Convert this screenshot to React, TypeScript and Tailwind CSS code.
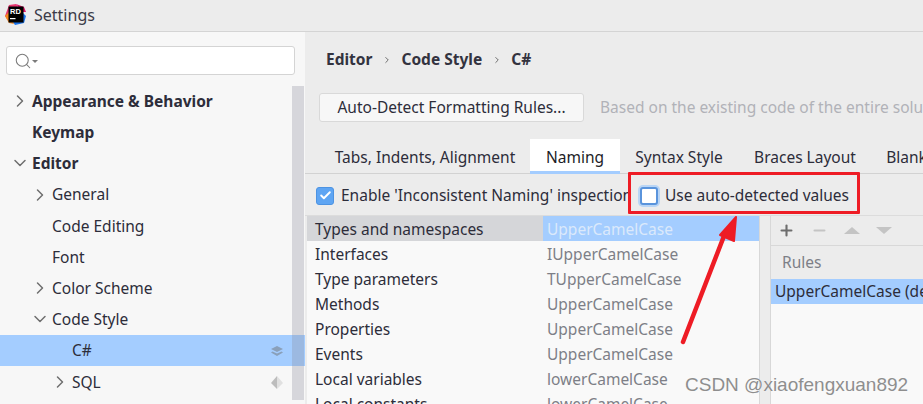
import { ChevronRight, ChevronDown, Check, Plus, Minus, Search } from 'lucide-react'

const FONT = "font-['Noto_Sans','Open_Sans',sans-serif]"

const tree = [
    { label: 'Appearance & Behavior', bold: true, arrow: 'right', indent: 0 },
    { label: 'Keymap', bold: true, arrow: '', indent: 0 },
    { label: 'Editor', bold: true, arrow: 'down', indent: 0 },
    { label: 'General', arrow: 'right', indent: 1 },
    { label: 'Code Editing', arrow: '', indent: 1 },
    { label: 'Font', arrow: '', indent: 1 },
    { label: 'Color Scheme', arrow: 'right', indent: 1 },
    { label: 'Code Style', arrow: 'down', indent: 1 },
    { label: 'C#', arrow: '', indent: 2, selected: true },
    { label: 'SQL', arrow: 'right', indent: 2 },
]

const naming = [
    ['Types and namespaces', 'UpperCamelCase'],
    ['Interfaces', 'IUpperCamelCase'],
    ['Type parameters', 'TUpperCamelCase'],
    ['Methods', 'UpperCamelCase'],
    ['Properties', 'UpperCamelCase'],
    ['Events', 'UpperCamelCase'],
    ['Local variables', 'lowerCamelCase'],
    ['Local constants', 'lowerCamelCase'],
]

const Logo = () => (
    <svg width="21" height="21" viewBox="0 0 21 21" className="shrink-0">
        <path d="M4 1 L11 0 L13 3 L4 18 L0 12 Z" fill="#e8376f" />
        <path d="M0 12 L5 7 L9 20 L4 19 Z" fill="#f58a1f" />
        <path d="M11 0 L19 3 L21 8 L17 8 Z" fill="#dd1265" />
        <path d="M17 8 L21 12 L19 19 L10 21 L8 18 Z" fill="#1b73e8" />
        <rect x="3.5" y="2.5" width="15" height="16" fill="#000" />
        <text x="5" y="10" fontSize="7.5" fontWeight="700" fill="#fff" fontFamily="'Liberation Sans', sans-serif">RD</text>
        <rect x="5" y="14" width="5.5" height="1.2" fill="#fff" />
    </svg>
)

const App = () => {
    return (
        <div className={`relative w-[923px] h-[404px] overflow-hidden bg-[#ececec] text-[15.5px] text-[#2d2d3a] ${FONT}`}>
            <div className="flex items-center gap-[8px] h-[32px] pl-[5px] pb-[2px] border-b border-[#d4d4d4] text-[#3b3b48]">
                <Logo />
                <span className="text-[16px]">Settings</span>
            </div>
            <div className="flex h-[372px]">
                {/* sidebar */}
                <div className="w-[305px] shrink-0 bg-[#f7f7f7] flex flex-col">
                    <div className="px-[6px] pt-[14px] shrink-0">
                        <div className="flex items-center h-[29px] w-[289px] pl-[7px] bg-white border border-[#d4d4d4] rounded-[3px]">
                            <Search size={18} className="text-[#7b7b7b]" strokeWidth={1.4} />
                            <div className="mt-[2px] border-x-[3px] border-x-transparent border-t-[3px] border-t-[#7b7b7b]" />
                        </div>
                    </div>
                    <div className="flex-1 flex flex-col mt-[10.4px] min-h-0">
                        {tree.map((item, index) => (
                            <div
                                key={index}
                                className={`flex items-center h-[31.2px] shrink-0 ${item.selected ? 'bg-[#a4cdff]' : ''} ${item.indent === 0 ? 'pl-[10px]' : item.indent === 1 ? 'pl-[30px]' : 'pl-[50px]'}`}
                            >
                                <span className="w-[22px] shrink-0 text-[#6e6e6e]">
                                    {item.arrow === 'right' && <ChevronRight size={20} strokeWidth={1.8} />}
                                    {item.arrow === 'down' && <ChevronDown size={20} strokeWidth={1.8} />}
                                </span>
                                <span className={`pt-[1px] ${item.bold ? 'font-bold' : ''}`}>{item.label}</span>
                            </div>
                        ))}
                    </div>
                </div>

                {/* main */}
                <div className="flex-1 min-w-0 flex flex-col overflow-hidden">
                    <div className="flex items-center shrink-0 h-[60px] pl-[21px] pb-[4px] font-bold text-[15.5px] text-[#33333f]">
                        <span>Editor</span>
                        <ChevronRight size={10} className="mx-[9.5px] text-[#555]" />
                        <span>Code Style</span>
                        <ChevronRight size={10} className="mx-[9.5px] text-[#555]" />
                        <span>C#</span>
                    </div>
                    <div className="flex items-center shrink-0 h-[30px] pl-[14px] whitespace-nowrap">
                        <button className="w-[265px] h-[29px] shrink-0 pt-[2px] bg-[#f7f7f7] border border-[#d9d9d9] rounded-[3px] text-[15.5px]">
                            Auto-Detect Formatting Rules...
                        </button>
                        <span className="ml-[16px] pt-[2px] text-[#b1b2b8]">Based on the existing code of the entire solution</span>
                    </div>
                    <div className="flex items-end shrink-0 h-[34px] mt-[18px] pl-[15px] border-b border-[#d2d2d2] whitespace-nowrap">
                        {[
                            ['Tabs, Indents, Alignment', 'w-[210px]'],
                            ['Naming', 'w-[90px]'],
                            ['Syntax Style', 'w-[118px]'],
                            ['Braces Layout', 'w-[134px]'],
                            ['Blank Lines', 'w-[111px]'],
                        ].map(([label, w]) => (
                            <div
                                key={label}
                                className={`${w} shrink-0 h-[35px] flex items-center justify-center ${label === 'Naming' ? 'bg-white border-b-[3px] border-[#a4cdff] text-[#1d1d26] pt-[5px] -mb-px' : 'pt-[5px]'}`}
                            >
                                {label}
                            </div>
                        ))}
                    </div>
                    <div className="flex items-center shrink-0 h-[42px] pl-[11px] pt-[1px] whitespace-nowrap">
                        <span className="flex items-center justify-center w-[18px] h-[18px] rounded-[3px] bg-[#5ea5f3] border border-[#4d93e2]">
                            <Check size={13} strokeWidth={3.5} className="text-white" />
                        </span>
                        <span className="ml-[7px] w-[287px] overflow-hidden">Enable 'Inconsistent Naming' inspection</span>
                        <span className="ml-[12px] w-[18px] h-[18px] rounded-[3px] bg-white border-2 border-[#5a94dc] shadow-[0_0_0_2px_#b9d5f5]" />
                        <span className="ml-[7px]">Use auto-detected values</span>
                    </div>
                    <div className="flex flex-1 min-h-0 border-t border-[#dcdcdc] -mt-px">
                        <div className="w-[453px] shrink-0 ml-[2px] bg-[#f9f9f9] flex flex-col border-r border-[#d8d8d8]">
                            {naming.map(([name, value], index) => (
                                <div key={name} className="flex items-center h-[25px] shrink-0 whitespace-nowrap">
                                    <span className={`w-[236px] h-full flex items-center pl-[8px] pt-[2px] ${index === 0 ? 'bg-[#d5d6d9]' : ''}`}>{name}</span>
                                    <span className={`flex-1 h-full flex items-center pl-[4px] pt-[2px] ${index === 0 ? 'bg-[#a4cdff] text-[#dbe9fb]' : 'text-[#7d7f87]'}`}>{value}</span>
                                </div>
                            ))}
                        </div>
                        <div className="w-[11px] shrink-0 bg-[#ececec] border-r border-[#d8d8d8]" />
                        <div className="flex-1 min-w-0 flex flex-col">
                            <div className="flex items-center shrink-0 h-[30px] pl-[7px] gap-[16px] border-b border-[#d8d8d8]">
                                <Plus size={17} strokeWidth={3} className="text-[#6e6e6e]" />
                                <Minus size={17} strokeWidth={3} className="text-[#c4c4c4]" />
                                <span className="border-x-[8px] border-x-transparent border-b-[7px] border-b-[#c4c4c4]" />
                                <span className="border-x-[8px] border-x-transparent border-t-[7px] border-t-[#c4c4c4]" />
                            </div>
                            <div className="flex items-center shrink-0 h-[33px] pl-[11px] text-[#7d7f87]">Rules</div>
                            <div className="flex items-center shrink-0 h-[25px] pl-[4px] bg-[#a4cdff] whitespace-nowrap overflow-hidden">UpperCamelCase (default)</div>
                            <div className="flex-1 bg-[#f9f9f9]" />
                        </div>
                    </div>
                </div>
            </div>

            {/* sidebar scrollbar and the row icons lying over it */}
            <div className="absolute left-[292px] top-[86px] w-[12px] h-[314px] bg-[#8c8c9c]/30" />
            <svg width="12" height="10" viewBox="0 0 12 10" className="absolute left-[271px] top-[346px]">
                <path d="M6 0 L12 3 L6 6 L0 3 Z" fill="#8aa0ba" />
                <path d="M1.5 5.5 L6 7.6 L10.5 5.5 L12 6.5 L6 10 L0 6.5 Z" fill="#8aa0ba" />
            </svg>
            <svg width="12" height="13" viewBox="0 0 12 13" className="absolute left-[271px] top-[376px]">
                <path d="M6 0 L0 7 L6 13 Z" fill="#bdbdbd" />
                <path d="M6 0 L12 7 L6 13 Z" fill="#e0e0e0" />
            </svg>

            {/* annotation */}
            <div className="absolute left-[628px] top-[172px] w-[232px] h-[42px] border-[3px] border-[#ee1c25] rounded-[1px]" />
            <svg width="923" height="404" viewBox="0 0 923 404" className="absolute left-0 top-0 pointer-events-none">
                <path d="M683 342 L724 236" stroke="#ee1c25" strokeWidth="4.5" strokeLinecap="round" fill="none" />
                <path d="M736 217 L720 235 L734 241 Z" fill="#ee1c25" stroke="#ee1c25" strokeWidth="2" strokeLinejoin="round" />
            </svg>
            <div className="absolute left-[685px] top-[373px] text-[19px] leading-[24px] text-[#8e8e8e] font-['Liberation_Sans',sans-serif] whitespace-nowrap [text-shadow:0_0_1px_#fff]">
                CSDN @xiaofengxuan892
            </div>
        </div>
    )
}

export default App
